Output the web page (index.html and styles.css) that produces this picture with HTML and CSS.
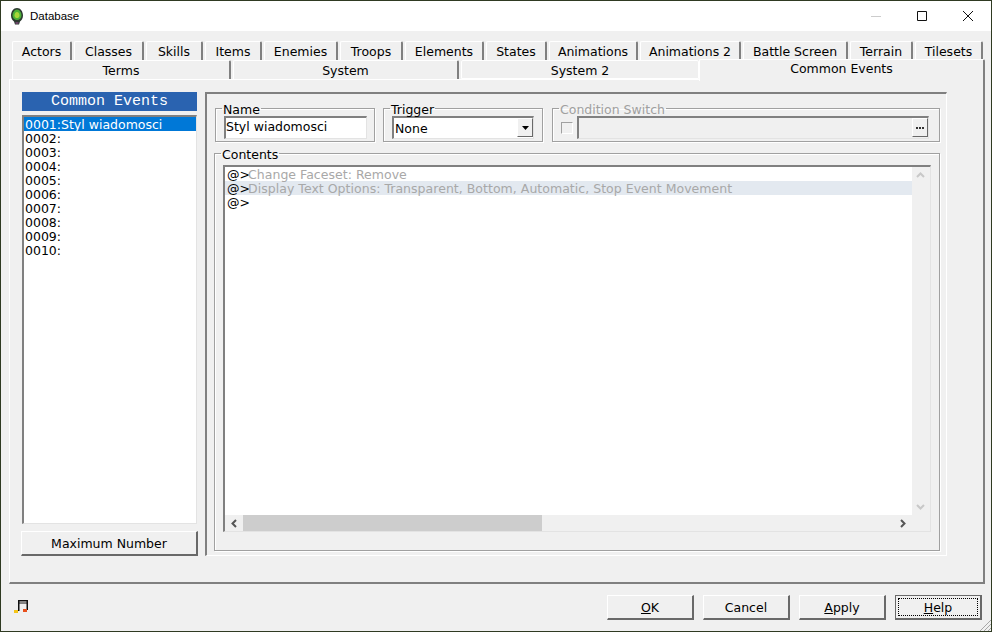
FILE: index.html
```html
<!DOCTYPE html>
<html lang="en">
<head>
    <meta charset="UTF-8">
    <title>Database</title>
    <link rel="stylesheet" href="styles.css">
</head>
<body>
    <div class="window">
        <div class="titlebar">
            <svg class="app-icon" width="12" height="17" viewBox="0 0 12 17">
                <path d="M6 0C2.500 0 0 3.500 0 7.500c0 3 1.500 5 3 6l1 3h4l1-3c1.500-1 3-3 3-6C12 3.500 9.500 0 6 0z" fill="#2c3a30"/>
                <path d="M6 1.500C3.500 1.500 1.500 4.500 1.500 7.500c0 2.500 2 4.500 4.500 4.500s4.500-2 4.500-4.500C10.500 4.500 8.500 1.500 6 1.500z" fill="#4cb038"/>
                <path d="M6 4C4.500 4 3.500 5.500 3.500 7.500S5 10 6 10s2.500-.5 2.500-2.500S7.500 4 6 4z" fill="#a8d838"/>
                <path d="M4.500 14h3v2h-3z" fill="#6a4468"/>
            </svg>
            <span class="title">Database</span>
            <div class="controls">
                <svg width="46" height="30" viewBox="0 0 46 30"><path d="M18 15.500h10" stroke="#ccc" fill="none"/></svg>
                <svg width="46" height="30" viewBox="0 0 46 30"><path d="M18.500 10.500h9v9h-9z" stroke="#111" fill="none"/></svg>
                <svg width="46" height="30" viewBox="0 0 46 30"><path d="M18 10l10 10M28 10L18 20" stroke="#111" fill="none"/></svg>
            </div>
        </div>

        <div class="client">
            <div class="tabs-top">
                <div class="tab">Actors</div>
                <div class="tab">Classes</div>
                <div class="tab">Skills</div>
                <div class="tab">Items</div>
                <div class="tab">Enemies</div>
                <div class="tab">Troops</div>
                <div class="tab">Elements</div>
                <div class="tab">States</div>
                <div class="tab">Animations</div>
                <div class="tab">Animations 2</div>
                <div class="tab">Battle Screen</div>
                <div class="tab">Terrain</div>
                <div class="tab">Tilesets</div>
            </div>
            <div class="tabs-bottom">
                <div class="tab">Terms</div>
                <div class="tab">System</div>
                <div class="tab">System 2</div>
                <div class="tab active">Common Events</div>
            </div>

            <div class="page">
                <div class="side">
                    <div class="side-title">Common Events</div>
                    <ul class="list">
                        <li class="selected">0001:Styl wiadomosci</li>
                        <li>0002:</li>
                        <li>0003:</li>
                        <li>0004:</li>
                        <li>0005:</li>
                        <li>0006:</li>
                        <li>0007:</li>
                        <li>0008:</li>
                        <li>0009:</li>
                        <li>0010:</li>
                    </ul>
                    <button class="btn max-btn">Maximum Number</button>
                </div>

                <div class="main">
                    <div class="top-row">
                        <fieldset class="group group-name">
                            <legend>Name</legend>
                            <div class="field">Styl wiadomosci</div>
                        </fieldset>
                        <fieldset class="group group-trigger">
                            <legend>Trigger</legend>
                            <div class="field combo">
                                <span>None</span>
                                <span class="combo-btn"><svg width="7" height="4" viewBox="0 0 7 4"><path d="M0 0h7L3.500 4z" fill="#000"/></svg></span>
                            </div>
                        </fieldset>
                        <fieldset class="group group-cond">
                            <legend>Condition Switch</legend>
                            <div class="cond-row">
                                <span class="check"></span>
                                <div class="field disabled">
                                    <span class="dots-btn"><svg width="8" height="2" viewBox="0 0 8 2"><path d="M0 0h2v2H0zM3 0h2v2H3zM6 0h2v2H6z" fill="#333"/></svg></span>
                                </div>
                            </div>
                        </fieldset>
                    </div>

                    <fieldset class="group group-contents">
                        <legend>Contents</legend>
                        <div class="editor">
                            <div class="lines">
                                <div class="line"><b>@&gt;</b>Change Faceset: Remove</div>
                                <div class="line current"><b>@&gt;</b>Display Text Options: Transparent, Bottom, Automatic, Stop Event Movement</div>
                                <div class="line"><b>@&gt;</b></div>
                            </div>
                            <div class="vscroll">
                                <svg width="9" height="6" viewBox="0 0 9 6"><path d="M1 5l3.500-3.500L8 5" stroke="#c8c8c8" stroke-width="2" fill="none"/></svg>
                                <svg width="9" height="6" viewBox="0 0 9 6"><path d="M1 1l3.500 3.500L8 1" stroke="#c8c8c8" stroke-width="2" fill="none"/></svg>
                            </div>
                            <div class="hscroll">
                                <svg class="arrow" width="6" height="9" viewBox="0 0 6 9"><path d="M5 1L1.500 4.500 5 8" stroke="#555" stroke-width="2" fill="none"/></svg>
                                <div class="track"><div class="thumb"></div></div>
                                <svg class="arrow" width="6" height="9" viewBox="0 0 6 9"><path d="M1 1l3.500 3.500L1 8" stroke="#555" stroke-width="2" fill="none"/></svg>
                            </div>
                        </div>
                    </fieldset>
                </div>
            </div>

            <div class="footer">
                <svg class="note" width="14" height="13" viewBox="0 0 14 13">
                    <path d="M4 0h10v10h-1.500V3.500h-7V11H4z" fill="#111"/>
                    <path d="M5.500 1.500h7v1h-7z" fill="#fff"/>
                    <path d="M0 10h4v3H0z" fill="#f5c518"/>
                    <path d="M9 9h4v3H9z" fill="#e8501c"/>
                </svg>
                <div class="buttons">
                    <button class="btn"><u>O</u>K</button>
                    <button class="btn">Cancel</button>
                    <button class="btn"><u>A</u>pply</button>
                    <button class="btn default"><span class="focus"><u>H</u>elp</span></button>
                </div>
            </div>
            <svg class="grip" width="11" height="11" viewBox="0 0 11 11">
                <path d="M11 0L0 11M11 4L4 11M11 8l-3 3" stroke="#a8a8a8" fill="none"/>
            </svg>
        </div>
    </div>
</body>
</html>
```

FILE: styles.css
```css
* {
    margin: 0;
    padding: 0;
    box-sizing: border-box;
}

body {
    width: 992px;
    height: 632px;
    overflow: hidden;
    font-family: "DejaVu Sans", sans-serif;
    font-size: 12.5px;
    color: #000;
}

.window {
    display: flex;
    flex-direction: column;
    width: 992px;
    height: 632px;
    border: 1px solid #2f3a22;
    background: #f0f0f0;
}

/* title bar */
.titlebar {
    display: flex;
    align-items: center;
    flex: none;
    height: 30px;
    padding-left: 10px;
    background: #fff;
}

.app-icon {
    margin-right: 7px;
}

.title {
    font-family: "Liberation Sans", sans-serif;
    font-size: 11.5px;
}

.controls {
    display: flex;
    margin-left: auto;
}

/* tabs */
.client {
    position: relative;
    flex: 1;
    padding: 10px 6px 0 8px;
}

.grip {
    position: absolute;
    right: 0;
    bottom: 0;
}

.tabs-top,
.tabs-bottom {
    display: grid;
    position: relative;
    height: 19px;
    padding-left: 3px;
}

.tabs-top {
    grid-template-columns: 60px 70px 57px 57px 74px 63px 79px 61px 89px 101px 105px 63px 68px;
    gap: 2px;
}

.tabs-bottom {
    grid-template-columns: 219px 226px 238px 284px;
    column-gap: 2px;
}

.tab {
    height: 19px;
    border-top: 1px solid #fff;
    border-left: 1px solid #fff;
    border-right: 2px solid #808080;
    border-radius: 2px 2px 0 0;
    background: #f0f0f0;
    text-align: center;
    line-height: 20px;
    white-space: nowrap;
}

.tabs-bottom .tab:nth-child(3) {
    border-right: 1px solid #fff;
    border-bottom: 1px solid #fff;
}

.tab.active {
    position: relative;
    height: 22px;
    margin: -1px 0 0 -2px;
    border-right: 2px solid #808080;
    line-height: 18px;
    z-index: 1;
}

.page {
    display: flex;
    height: 505px;
    padding: 12px 0 0 11px;
    border-top: 1px solid #fff;
    border-left: 1px solid #fff;
    border-right: 2px solid #808080;
    border-bottom: 2px solid #808080;
}

/* left column */
.side {
    display: flex;
    flex-direction: column;
    width: 177px;
}

.side-title {
    height: 19px;
    margin: 0 1px;
    background: #2a63b0;
    color: #fff;
    font-family: "Liberation Mono", monospace;
    font-size: 15px;
    line-height: 20px;
    text-align: center;
}

.list {
    height: 409px;
    margin: 4px 1px 0;
    list-style: none;
    border-top: 2px solid #808080;
    border-left: 2px solid #808080;
    border-right: 1px solid #e3e3e3;
    border-bottom: 1px solid #e3e3e3;
    background: #fff;
}

.list li {
    height: 14px;
    padding-left: 1px;
    line-height: 15px;
}

.list .selected {
    background: #0078d7;
    color: #fff;
}

.btn {
    width: 87px;
    height: 25px;
    padding-top: 1px;
    border-top: 1px solid #fff;
    border-left: 1px solid #fff;
    border-right: 2px solid #696969;
    border-bottom: 2px solid #696969;
    background: #f0f0f0;
    font: inherit;
    color: #000;
}

.max-btn {
    width: 177px;
    margin-top: 7px;
}

/* right panel */
.main {
    width: 742px;
    height: 464px;
    margin-left: 7px;
    padding: 7px 0 0 8px;
    border-top: 2px solid #808080;
    border-left: 2px solid #808080;
    border-right: 1px solid #fff;
    border-bottom: 1px solid #fff;
}

.top-row {
    display: flex;
    column-gap: 8px;
}

.group {
    border: 1px solid #a0a0a0;
    box-shadow: 1px 1px 0 #fff, inset 1px 1px 0 #fff;
}

.group legend {
    margin-left: 6px;
    padding: 2px 1px 0;
    line-height: 13px;
}

.group-name,
.group-trigger {
    width: 160px;
    height: 41px;
}

.group-cond {
    width: 388px;
    height: 41px;
    margin-left: 1px;
    color: #a0a0a0;
}

.field {
    height: 23px;
    border-top: 2px solid #808080;
    border-left: 2px solid #808080;
    border-right: 1px solid #e3e3e3;
    border-bottom: 1px solid #e3e3e3;
    background: #fff;
    line-height: 18px;
}

.group-name .field {
    width: 143px;
    margin: 0 0 0 8px;
}

.combo {
    display: flex;
    justify-content: space-between;
    width: 142px;
    margin: 0 0 0 8px;
    padding-left: 1px;
    color: #000;
}

.combo span:first-child {
    line-height: 21px;
}

.combo-btn,
.dots-btn {
    display: flex;
    align-items: center;
    justify-content: center;
    width: 16px;
    height: 19px;
    border-top: 1px solid #fff;
    border-left: 1px solid #fff;
    border-right: 1px solid #696969;
    border-bottom: 1px solid #696969;
    background: #f0f0f0;
}

.cond-row {
    display: flex;
    align-items: center;
    padding: 0 0 0 8px;
}

.check {
    width: 12px;
    height: 12px;
    margin-right: 4px;
    border: 1px solid #a0a0a0;
    border-color: #a0a0a0 #fff #fff #a0a0a0;
}

.field.disabled {
    display: flex;
    justify-content: flex-end;
    width: 352px;
    background: #f0f0f0;
}

/* event contents */
.group-contents {
    width: 726px;
    height: 405px;
    margin: 4px 0 0 -1px;
}

.editor {
    display: grid;
    grid-template-columns: 687px 17px;
    grid-template-rows: 348px 16px;
    width: 708px;
    height: 367px;
    margin: 4px 0 0 8px;
    border-top: 2px solid #808080;
    border-left: 2px solid #808080;
    border-right: 1px solid #e3e3e3;
    border-bottom: 1px solid #e3e3e3;
}

.lines {
    background: #fff;
}

.line {
    height: 14px;
    padding-left: 2px;
    color: #a8a8a8;
    letter-spacing: .03px;
    line-height: 15px;
    white-space: nowrap;
}

.line b {
    margin-right: -2px;
    font-weight: normal;
    color: #000;
}

.line.current {
    background: #e3e9f0;
}

.vscroll {
    display: flex;
    flex-direction: column;
    align-items: center;
    justify-content: space-between;
    padding: 5px 0;
}

.hscroll {
    display: flex;
    align-items: center;
    grid-column: 1;
}

.hscroll .arrow {
    flex: none;
    margin: 0 6px;
}

.track {
    flex: 1;
    height: 16px;
}

.thumb {
    width: 299px;
    height: 16px;
    background: #cdcdcd;
}

/* footer */
.footer {
    display: flex;
    align-items: center;
    justify-content: space-between;
    height: 47px;
    padding: 0 3px 0 5px;
}

.note {
    margin-bottom: 3px;
}

.buttons {
    display: flex;
    column-gap: 9px;
}

.default {
    padding: 2px;
    border: 2px solid #696969;
    border-top-width: 1px;
    border-left-width: 1px;
}

.focus {
    display: block;
    height: 100%;
    border: 1px dotted #000;
    line-height: 17px;
}
```
